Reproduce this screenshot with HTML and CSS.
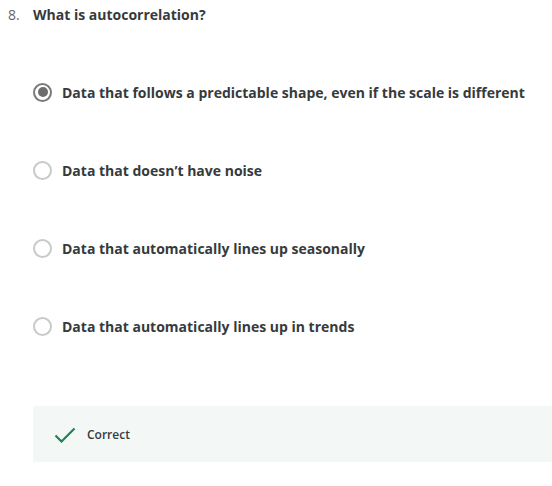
FILE: index.html
```html
<!DOCTYPE html>
<html>
<head>
<meta charset="utf-8">
<link rel="stylesheet" href="styles.css">
</head>
<body>
<div class="question">
  <div class="qhead">
    <span class="num">8.</span>
    <span class="qtext">What is autocorrelation?</span>
  </div>
  <div class="options">
    <label class="option"><span class="radio checked"></span><span class="otext">Data that follows a predictable shape, even if the scale is different</span></label>
    <label class="option"><span class="radio"></span><span class="otext">Data that doesn’t have noise</span></label>
    <label class="option"><span class="radio"></span><span class="otext">Data that automatically lines up seasonally</span></label>
    <label class="option"><span class="radio"></span><span class="otext">Data that automatically lines up in trends</span></label>
  </div>
  <div class="feedback">
    <svg class="check" width="22" height="16" viewBox="0 0 22 16"><path d="M1.5 8.5 L7.5 14.5 L20.5 1.5" fill="none" stroke="#1f8354" stroke-width="2.2"/></svg>
    <span class="ftext">Correct</span>
  </div>
</div>
</body>
</html>
```
FILE: styles.css
```css
html, body { margin: 0; padding: 0; background: #fff; }
body { font-family: "Open Sans", sans-serif; color: #373a3c; }
.question { padding: 5px 0 0 8px; }
.qhead { display: flex; align-items: baseline; height: 20px; }
.num { width: 25px; font-size: 14px; color: #666; }
.qtext { font-size: 14px; font-weight: 700; color: #373a3c; }
.options { display: flex; flex-direction: column; padding-left: 25px; margin-top: 57px; gap: 58px; }
.option { display: flex; align-items: center; height: 20px; }
.radio { width: 15px; height: 15px; border: 2px solid #c9c9c9; border-radius: 50%; box-sizing: content-box; margin-right: 10px; position: relative; flex: none; }
.radio.checked { border-color: #7a7a7a; }
.radio.checked::after { content: ""; position: absolute; left: 2.5px; top: 2.5px; width: 10px; height: 10px; border-radius: 50%; background: #6d6d6d; }
.otext { font-size: 14px; font-weight: 700; color: #373a3c; }
.feedback { margin: 70px 0 0 25px; height: 56px; background: #f3f8f7; display: flex; align-items: center; padding-left: 21px; }
.check { margin-right: 11px; margin-top: 1px; }
.ftext { font-size: 12px; font-weight: 600; color: #373a3c; }
```
